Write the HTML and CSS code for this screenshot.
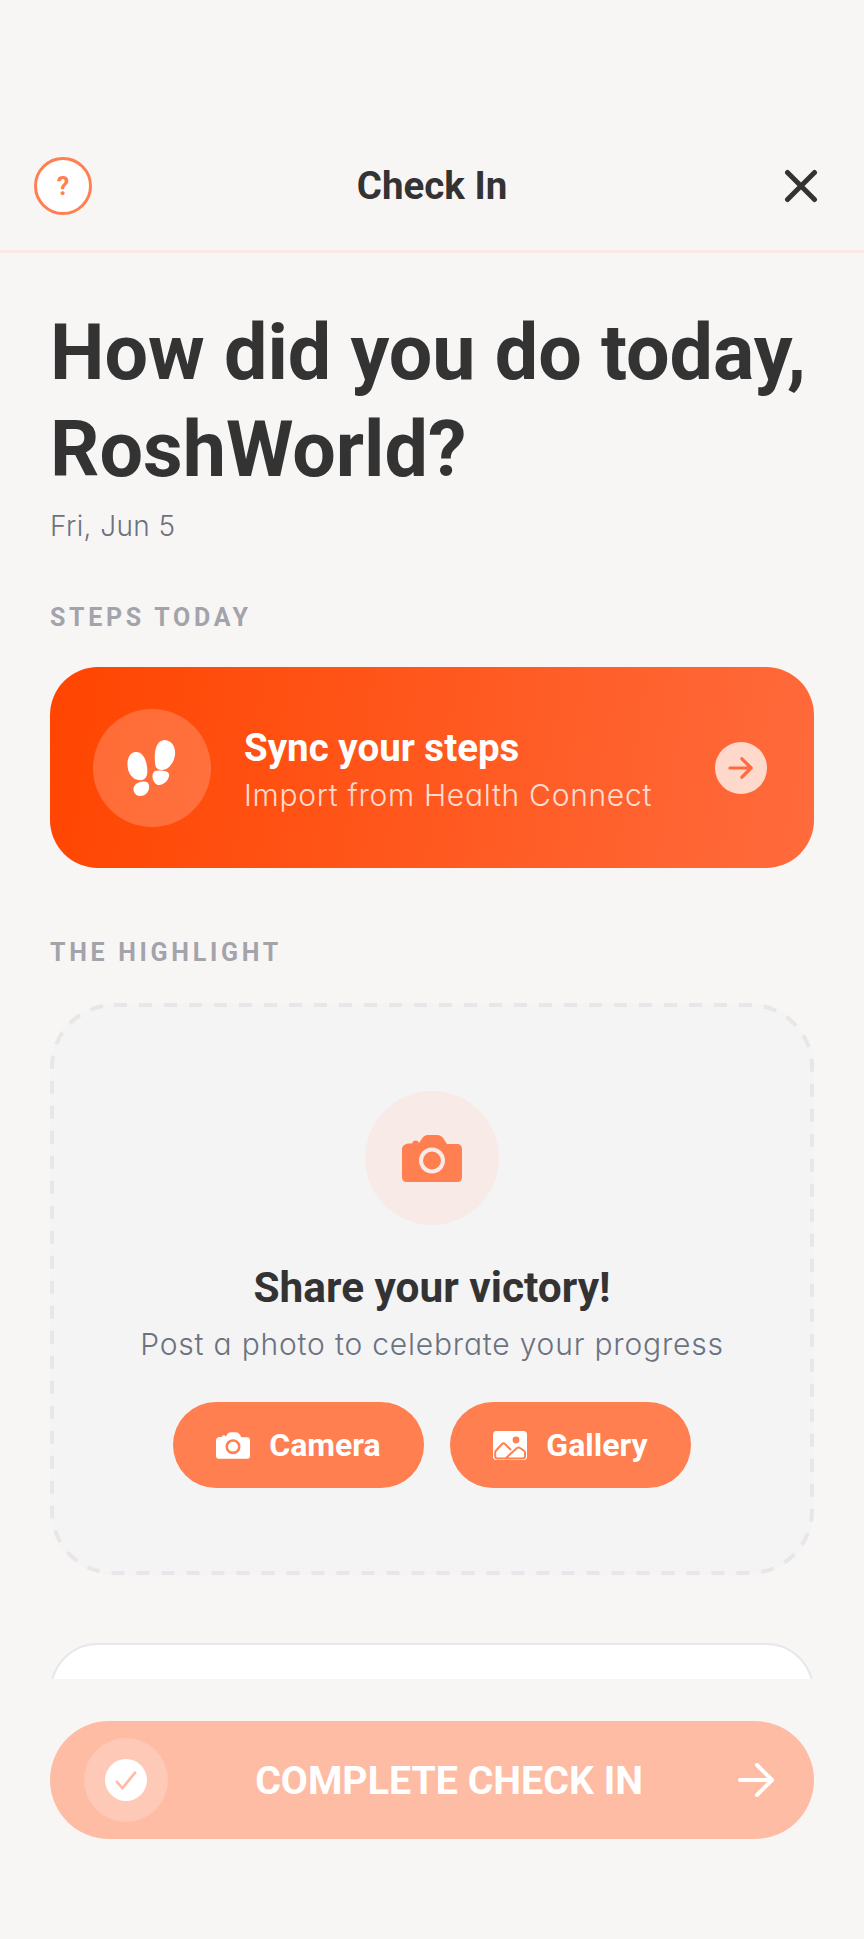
FILE: index.html
```html
<!DOCTYPE html>
<html lang="en">
<head>
    <meta charset="UTF-8">
    <meta name="viewport" content="width=device-width, initial-scale=1.0">
    <title>Check In</title>
    <link rel="stylesheet" href="styles.css">
</head>
<body>
    <div class="app">
        <!-- Header -->
        <header class="top-bar">
            <div class="help-btn">?</div>
            <div class="top-title">Check In</div>
            <div class="close-btn">
                <svg class="close-icon" viewBox="0 0 34 34"><path d="M3.500 3.500L30.500 30.500M30.500 3.500L3.500 30.500"/></svg>
            </div>
        </header>

        <div class="content">
            <h1 class="greeting">How did you do today, RoshWorld?</h1>
            <div class="date">Fri, Jun 5</div>

            <!-- Steps -->
            <div class="section-label steps-label">STEPS TODAY</div>
            <div class="sync-card">
                <div class="sync-icon">
                    <svg class="feet-icon" viewBox="0 0 50 56">
                        <path d="M9 12C15 11 20 17 21 27C22 33 21 39 16 40C11 41 5 38 2.500 31C0 23 2 13 9 12Z"/>
                        <path d="M10 44C14 41 22 40 23 45C24 51 20 56 14 56C8 56 5 48 10 44Z"/>
                        <path d="M38 0C45 0 50 6 49 15C48 22 43 30 36 30C31 30 29 27 29 22C28 12 30 1 38 0Z"/>
                        <path d="M29 31C33 30 42 30 43 34C44 39 38 45 33 45C27 45 24 34 29 31Z"/>
                    </svg>
                </div>
                <div class="sync-text">
                    <div class="sync-title">Sync your steps</div>
                    <div class="sync-sub">Import from Health Connect</div>
                </div>
                <div class="sync-arrow">
                    <svg viewBox="0 0 28 26"><path d="M2 13H25M15 3L25 13L15 23"/></svg>
                </div>
            </div>

            <!-- Highlight -->
            <div class="section-label highlight-label">THE HIGHLIGHT</div>
            <div class="highlight-box">
                <svg class="dash-frame" viewBox="0 0 764 572"><rect x="2" y="2" width="760" height="568" rx="62"/></svg>
                <div class="photo-circle">
                    <svg class="camera-big" viewBox="0 0 60 47">
                        <path class="cam-body" d="M6 8.500H10C10.500 6.500 12 5.500 14 5.500C15.500 5.500 16.500 6.500 17 8L19 5C21 1.500 23 0 26 0H35C38 0 40 1.500 41.500 3.500L45 9H55C58 9 60 11 60 14V42C60 45 58 47 55 47H5C2 47 0 45 0 42V14C0 11 3 9 6 8.500Z"/>
                        <circle class="cam-lens" cx="30" cy="25.500" r="11"/>
                    </svg>
                </div>
                <div class="share-title">Share your victory!</div>
                <div class="share-sub">Post a photo to celebrate your progress</div>
                <div class="photo-btns">
                    <div class="photo-btn">
                        <svg class="camera-small" viewBox="0 0 60 47">
                            <path class="cam-body" d="M6 8.500H10C10.500 6.500 12 5.500 14 5.500C15.500 5.500 16.500 6.500 17 8L19 5C21 1.500 23 0 26 0H35C38 0 40 1.500 41.500 3.500L45 9H55C58 9 60 11 60 14V42C60 45 58 47 55 47H5C2 47 0 45 0 42V14C0 11 3 9 6 8.500Z"/>
                            <circle class="cam-lens-small" cx="30" cy="25.500" r="11"/>
                        </svg>
                        Camera
                    </div>
                    <div class="photo-btn gallery-btn">
                        <svg class="gallery-icon" viewBox="0 0 34 29">
                            <rect width="34" height="29" rx="3.500" fill="#fff"/>
                            <circle cx="23" cy="9" r="3.400" fill="#ff7f50"/>
                            <path class="gallery-line" d="M2.200 20.500L9 13Q10.500 11.800 12 13L18 19M12.500 27.500L24 17Q25.500 16 27 17L32 20.500M2.200 20.500V25Q2.200 27.500 4.500 27.500H29.500Q32 27.500 32 25V20.500"/>
                        </svg>
                        Gallery
                    </div>
                </div>
            </div>

            <!-- next card, cut off by the footer -->
            <div class="next-card"></div>
        </div>

        <div class="footer">
            <div class="complete-btn">
                <div class="check-ring">
                    <div class="check-dot">
                        <svg viewBox="0 0 24 22"><path d="M2 13L8 20L22 3"/></svg>
                    </div>
                </div>
                <div class="complete-text">COMPLETE CHECK IN</div>
                <svg class="complete-arrow" viewBox="0 0 36 34"><path d="M2 17H34M19 2L34 17L19 32"/></svg>
            </div>
        </div>
    </div>
</body>
</html>
```

FILE: styles.css
```css
body {
    margin: 0;
    padding: 0;
    background-color: #f8f6f5;
    font-family: Roboto, Arial, sans-serif;
    color: #333333;
}
.app {
    width: 864px;
    height: 1939px;
    display: flex;
    flex-direction: column;
    overflow: hidden;
}
.top-bar {
    height: 93px;
    padding: 157px 34px 0;
    display: flex;
    align-items: flex-start;
    justify-content: space-between;
    border-bottom: 3px solid #fbe9e7;
    flex-shrink: 0;
}
.help-btn {
    width: 58px;
    height: 58px;
    box-sizing: border-box;
    border: 3px solid #ff7f50;
    border-radius: 50%;
    background: #fff;
    color: #ff7f50;
    font-size: 25px;
    font-weight: 700;
    display: flex;
    align-items: center;
    justify-content: center;
}
.top-title {
    font-size: 38.500px;
    font-weight: 700;
    line-height: 58px;
}
.close-btn {
    width: 58px;
    height: 58px;
    display: flex;
    align-items: center;
    justify-content: center;
}
.close-icon {
    width: 34px;
    height: 34px;
    fill: none;
    stroke: #333333;
    stroke-width: 5;
    stroke-linecap: round;
}
.content {
    height: 1426px;
    padding: 0 50px;
    overflow: hidden;
    flex-shrink: 0;
}
.greeting {
    margin: 51px 0 0;
    font-size: 77.200px;
    line-height: 97px;
    font-weight: 700;
}
.date {
    margin-top: 10px;
    font-family: Inter, Arial, sans-serif;
    font-feature-settings: "cv11";
    font-weight: 300;
    font-size: 28px;
    line-height: 36px;
    letter-spacing: 0.400px;
    color: #6b7280;
}
.section-label {
    font-size: 25px;
    line-height: 28px;
    font-weight: 700;
    letter-spacing: 3.700px;
    color: #a3a3ab;
}
.steps-label {
    margin-top: 60px;
}
.sync-card {
    margin-top: 35px;
    height: 201px;
    border-radius: 48px;
    padding: 0 47px 0 43px;
    display: flex;
    align-items: center;
    background: linear-gradient(100deg, #ff4500, #ff6b3d);
}
.sync-icon {
    width: 118px;
    height: 118px;
    border-radius: 50%;
    background: rgba(255, 255, 255, 0.2);
    display: flex;
    align-items: center;
    justify-content: center;
}
.feet-icon {
    width: 50px;
    height: 56px;
    margin-right: 2px;
    fill: #fff;
}
.sync-text {
    flex: 1;
    margin-left: 33px;
    padding-top: 3px;
    color: #fff;
}
.sync-title {
    font-size: 38.500px;
    line-height: 46px;
    font-weight: 700;
}
.sync-sub {
    margin-top: 5px;
    font-family: Inter, Arial, sans-serif;
    font-feature-settings: "cv11";
    font-weight: 300;
    font-size: 30px;
    line-height: 38px;
    letter-spacing: 0.700px;
    color: rgba(255, 255, 255, 0.8);
}
.sync-arrow {
    width: 52px;
    height: 52px;
    border-radius: 50%;
    background: rgba(255, 255, 255, 0.75);
    display: flex;
    align-items: center;
    justify-content: center;
}
.sync-arrow svg {
    width: 26px;
    height: 24px;
    fill: none;
    stroke: #ff6b3d;
    stroke-width: 3.500;
    stroke-linecap: round;
    stroke-linejoin: round;
}
.highlight-label {
    margin-top: 71px;
}
.highlight-box {
    margin-top: 36px;
    height: 572px;
    box-sizing: border-box;
    border-radius: 64px;
    background-color: #f4f4f5;
    padding-top: 88px;
    display: flex;
    flex-direction: column;
    align-items: center;
    position: relative;
}
.dash-frame {
    position: absolute;
    left: 0;
    top: 0;
    width: 764px;
    height: 572px;
    fill: none;
    stroke: #e7e7e9;
    stroke-width: 4;
    stroke-dasharray: 13 12;
}
.photo-circle {
    width: 134px;
    height: 134px;
    border-radius: 50%;
    background: #f8ebe7;
    display: flex;
    align-items: center;
    justify-content: center;
}
.camera-big {
    width: 60px;
    height: 47px;
}
.cam-body {
    fill: #ff7f50;
}
.cam-lens {
    fill: #ff7f50;
    stroke: #f8ebe7;
    stroke-width: 4;
}
.share-title {
    margin-top: 38px;
    font-size: 42.400px;
    line-height: 50px;
    font-weight: 700;
}
.share-sub {
    margin-top: 12px;
    font-family: Inter, Arial, sans-serif;
    font-feature-settings: "cv11";
    font-weight: 300;
    font-size: 30px;
    line-height: 38px;
    letter-spacing: 0.800px;
    color: #6b7280;
}
.photo-btns {
    margin-top: 39px;
    display: flex;
    gap: 26px;
}
.photo-btn {
    width: 251px;
    height: 86px;
    gap: 19px;
    border-radius: 43px;
    background: #ff7f50;
    color: #fff;
    font-size: 32px;
    font-weight: 700;
    display: flex;
    align-items: center;
    justify-content: center;
}
.gallery-btn {
    width: 241px;
}
.camera-small {
    width: 34px;
    height: 27px;
}
.camera-small .cam-body {
    fill: #fff;
}
.cam-lens-small {
    fill: #fff;
    stroke: #ff7f50;
    stroke-width: 4.500;
}
.gallery-icon {
    width: 34px;
    height: 29px;
}
.gallery-line {
    fill: none;
    stroke: #ff7f50;
    stroke-width: 2;
}
.next-card {
    margin-top: 68px;
    height: 140px;
    box-sizing: border-box;
    border: 2px solid #e5e7eb;
    border-radius: 48px;
    background: #fff;
}
.footer {
    padding: 42px 50px 0;
}
.complete-btn {
    height: 118px;
    border-radius: 59px;
    background: #febca4;
    padding: 0 40px 0 34px;
    display: flex;
    align-items: center;
}
.check-ring {
    width: 84px;
    height: 84px;
    border-radius: 50%;
    background: rgba(255, 255, 255, 0.2);
    display: flex;
    align-items: center;
    justify-content: center;
}
.check-dot {
    width: 42px;
    height: 42px;
    border-radius: 50%;
    background: #fff;
    display: flex;
    align-items: center;
    justify-content: center;
}
.check-dot svg {
    width: 22px;
    height: 20px;
    fill: none;
    stroke: #febca4;
    stroke-width: 3;
    stroke-linecap: round;
    stroke-linejoin: round;
}
.complete-text {
    flex: 1;
    padding: 2px 8px 0 0;
    text-align: center;
    color: #fff;
    font-size: 39.300px;
    font-weight: 700;
}
.complete-arrow {
    width: 36px;
    height: 34px;
    fill: none;
    stroke: #fff;
    stroke-width: 4;
    stroke-linecap: round;
    stroke-linejoin: round;
}
```
